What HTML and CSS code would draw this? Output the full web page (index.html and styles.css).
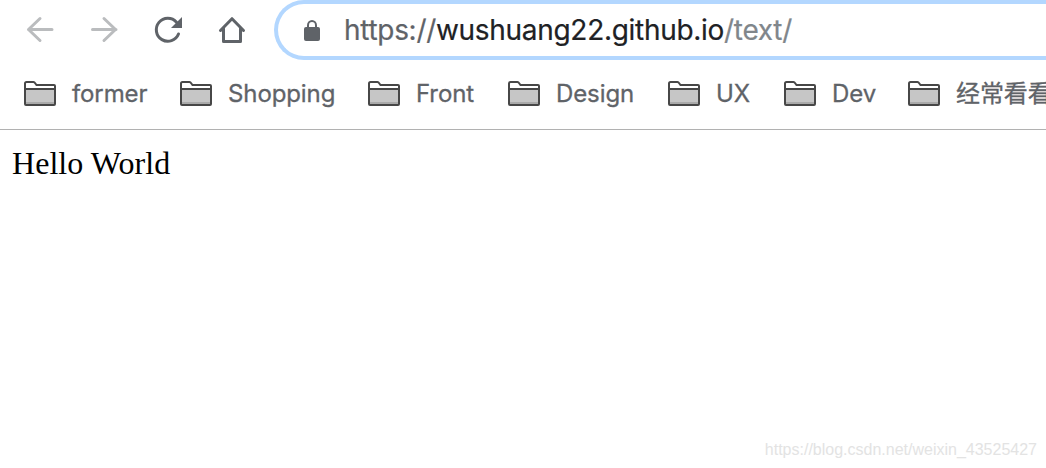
FILE: index.html
```
<!DOCTYPE html>
<html>
    <head>
    <title>Hello World</title>
    <meta charset="UTF-8">
    <meta name="viewport" content="width=device-width, initial-scale=1.0">

    <link rel="stylesheet" href="styles.css">
    </head>

    <body>
        <svg class="defs">
            <symbol id="folder" viewBox="0 0 32 26">
                <path d="M1 23V2.5Q1 1 2.5 1H10L13 4H30Q31 4 31 5V23Q31 24 30 24H2Q1 24 1 23Z" fill="#fff"/>
                <path d="M2 9H30V23H2Z" fill="#c6c6c6"/>
                <path d="M2 21H30V23H2Z" fill="#aaa"/>
                <path d="M1 8H31M1 23V2.5Q1 1 2.5 1H9.5Q10.5 1 11 2L12.5 4H30Q31 4 31 5V23Q31 24 30 24H2Q1 24 1 23Z" fill="none" stroke="#474747" stroke-width="2"/>
            </symbol>
        </svg>

        <div class="toolbar">
            <div class="nav">
                <svg class="icon apagado" viewBox="0 0 32 32">
                    <path d="M28 15.5H4.5M16 4.5L4.5 15.5L16 26.5"/>
                </svg>
                <svg class="icon apagado" viewBox="0 0 32 32">
                    <path d="M4.5 15.5H28M16 4.5L27.5 15.5L16 26.5"/>
                </svg>
                <svg class="icon" viewBox="0 0 32 32">
                    <path d="M26.5 20A11.5 11.5 0 1 1 24.5 8.2"/>
                    <path class="relleno" d="M30 3V14H19Z"/>
                </svg>
                <svg class="icon" viewBox="0 0 32 32">
                    <path d="M4.5 16.5L16 4.7L27.5 16.5M7.5 14.5V27.5H24.5V14.5"/>
                </svg>
            </div>
            <div class="omnibox">
                <svg class="candado" viewBox="0 0 16 22">
                    <path d="M4 8V5.2A4 4.2 0 0 1 12 5.2V8" fill="none" stroke="#5f6368" stroke-width="2"/>
                    <rect x="0" y="7" width="16" height="14" rx="2" fill="#5f6368"/>
                </svg>
                <div class="url"><span class="esquema">https://</span><span class="dominio">wushuang22.github.io</span><span class="ruta">/text/</span></div>
            </div>
        </div>

        <div class="marcadores">
            <div class="marcador"><svg class="folder"><use href="#folder"/></svg><span>former</span></div>
            <div class="marcador"><svg class="folder"><use href="#folder"/></svg><span>Shopping</span></div>
            <div class="marcador"><svg class="folder"><use href="#folder"/></svg><span>Front</span></div>
            <div class="marcador"><svg class="folder"><use href="#folder"/></svg><span>Design</span></div>
            <div class="marcador"><svg class="folder"><use href="#folder"/></svg><span>UX</span></div>
            <div class="marcador"><svg class="folder"><use href="#folder"/></svg><span>Dev</span></div>
            <div class="marcador"><svg class="folder"><use href="#folder"/></svg><span>经常看看</span></div>
        </div>

        <div class="pagina">Hello World</div>

        <div class="marca">https://blog.csdn.net/weixin_43525427</div>
    </body>
</html>
```

FILE: styles.css
```
body{
    margin: 0;
    height: 468px;
    overflow: hidden;
    display: flex;
    flex-direction: column;
    background-color: white;
}

.defs{
    display: none;
}

.toolbar{
    display: flex;
    height: 60px;
}

.nav{
    display: flex;
    align-items: center;
    flex: none;
    width: 250px;
    gap: 32px;
    padding-left: 24px;
}

.icon{
    width: 32px;
    height: 32px;
    flex: none;
    fill: none;
    stroke: #5f6368;
    stroke-width: 3;
    stroke-linecap: round;
    stroke-linejoin: round;
}

.apagado{
    stroke: #babcbe;
}

.icon .relleno{
    fill: #5f6368;
    stroke: none;
}

.omnibox{
    box-sizing: border-box;
    display: flex;
    align-items: center;
    flex: 1;
    height: 60px;
    padding-left: 26px;
    border: 4px solid #b3d7ff;
    border-right: none;
    border-radius: 30px 0 0 30px;
}

.candado{
    width: 16px;
    height: 22px;
    margin-top: 1px;
    margin-right: 24px;
}

.url{
    font-family: Inter, sans-serif;
    font-size: 28px;
    letter-spacing: -0.3px;
    -webkit-text-stroke: 0.2px;
    white-space: nowrap;
}

.esquema{
    color: #5f6368;
}

.dominio{
    color: #202124;
}

.ruta{
    color: #80868b;
}

.marcadores{
    box-sizing: border-box;
    display: grid;
    grid-template-columns: 156px 188px 140px 160px 116px 124px 150px;
    align-items: center;
    flex: none;
    height: 70px;
    padding: 0 0 1px 24px;
    border-bottom: 1px solid #b1b1b1;
    font-family: Inter, "Noto Sans CJK SC", sans-serif;
    font-size: 24px;
    letter-spacing: -0.1px;
    -webkit-text-stroke: 0.3px;
    color: #5f6368;
}

.marcador{
    display: flex;
    align-items: center;
    gap: 16px;
    line-height: 30px;
    white-space: nowrap;
}

.folder{
    width: 32px;
    height: 26px;
}

.pagina{
    flex: 1;
    padding: 15px 12px;
    font-family: "Liberation Serif", serif;
    font-size: 32px;
    letter-spacing: 0.05px;
    color: black;
}

.marca{
    padding: 0 9px 9px;
    text-align: right;
    font-family: "Liberation Sans", sans-serif;
    font-size: 16px;
    color: #e3e3e3;
}
```
